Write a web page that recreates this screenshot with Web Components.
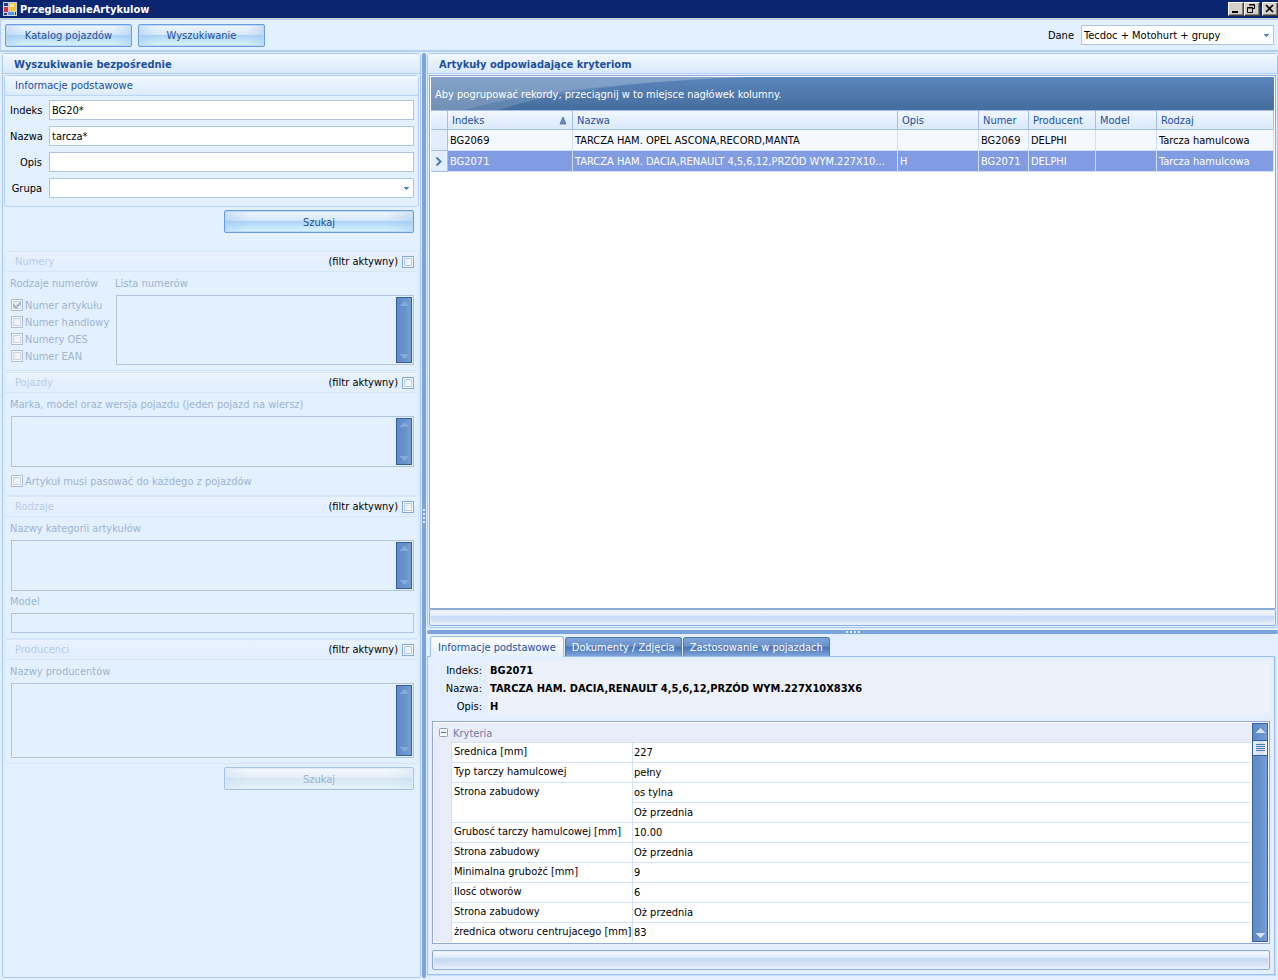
<!DOCTYPE html>
<html lang="pl">
<head>
<meta charset="utf-8">
<title>PrzegladanieArtykulow</title>
<style>
  html, body { height: 100%; }
  body {
    margin: 0;
    font: 11px/14px "DejaVu Sans Condensed", "Noto Sans", sans-serif;
    color: #000;
    background: #e3efff;
    --frame: #a9c8f0;
    --line: #b0c4e2;
    --ink: #1e4f9c;
    --muted: #9db4d2;
    --face: #e3f0ff;
  }
</style>
</head>
<body>
<app-window></app-window>
<script>
const BASE = `
  *, *::before, *::after { box-sizing: border-box; }
  input, select, textarea, button { font: inherit; color: inherit; margin: 0; border-radius: 0; outline: none; }
  :host([hidden]) { display: none; }
`;
function define(name, html, setup) {
  const template = document.createElement('template');
  template.innerHTML = html.replace('<style>', '<style>' + BASE);
  customElements.define(name, class extends HTMLElement {
    constructor() {
      super();
      this.attachShadow({ mode: 'open' }).append(template.content.cloneNode(true));
    }
    connectedCallback() {
      if (setup && !this.ready) { this.ready = true; setup.call(this, this.shadowRoot); }
    }
  });
}

/* Glossy push button */
define('ui-button', `<style>
  :host { display: block; color: var(--ink); }
  button {
    display: block; width: 100%; height: 23px; padding: 2px 6px 0; border: 1px solid #6b9be0; border-radius: 2px;
    background:
      linear-gradient(90deg, #9cc4ee66, #ffffff00 14%, #ffffff00 86%, #9cc4ee66),
      linear-gradient(#f1f7fd, #d3e7fa 48%, #aed3f6 50%, #c9e9fc 80%, #daf6ff);
    box-shadow: inset 0 0 0 1px #b9d8f7;
  }
  button:disabled {
    color: var(--muted); border-color: #a3c3ea;
    background:
      linear-gradient(90deg, #c5dcf366, #ffffff00 14%, #ffffff00 86%, #c5dcf366),
      linear-gradient(#f6fafd, #e5eef6 48%, #d5e5f2 50%, #e0eff8 80%, #ebf8fd);
    box-shadow: inset 0 0 0 1px #e0edf9;
  }
</style><button type="button"><slot></slot></button>`, function (root) {
  root.querySelector('button').disabled = this.hasAttribute('disabled');
});

/* Label with a one-line text box */
define('text-field', `<style>
  :host { display: grid; grid-template-columns: 32px 1fr; column-gap: 7px; align-items: center; }
  :host([stacked]) { grid-template-columns: 1fr; color: var(--muted); row-gap: 4px; }
  :host([stacked]) label { text-align: left; margin-left: -1px; padding-top: 1px; }
  label { padding-top: 2px; text-align: right; white-space: nowrap; }
  input { width: 100%; height: 20px; padding: 0 2px; border: 1px solid var(--line); background: #fff; }
  input:disabled { background: var(--face); }
</style><label for="box"></label><input id="box" type="text">`, function (root) {
  root.querySelector('label').textContent = this.getAttribute('label');
  const input = root.querySelector('input');
  input.value = this.getAttribute('value') || '';
  input.disabled = this.hasAttribute('disabled');
});

/* Label with a drop-down */
define('select-field', `<style>
  :host { display: grid; grid-template-columns: 32px 1fr; column-gap: 7px; align-items: center; }
  label { padding-top: 2px; text-align: right; white-space: nowrap; }
  div { position: relative; }
  select { display: block; width: 100%; height: 20px; padding: 2px 16px 0 2px; appearance: none; border: 1px solid var(--line); background: #fff; }
  svg { position: absolute; right: 5px; top: 9px; pointer-events: none; }
</style><label for="box"></label>
<div><select id="box"><option></option></select>
<svg width="5" height="3"><path d="M0 0h5v1h-1v1h-1v1h-1v-1h-1v-1h-1z" fill="#4b86c8"/></svg></div>`, function (root) {
  root.querySelector('label').textContent = this.getAttribute('label');
  root.querySelector('option').textContent = this.getAttribute('value') || '';
});

/* Tick box with caption on either side */
define('tick-box', `<style>
  :host { display: block; }
  label { display: flex; align-items: center; gap: 2px; height: 14px; white-space: nowrap; }
  span { padding-top: 1px; }
  :host([disabled]) { color: var(--muted); }
  :host([trailing]) label { flex-direction: row-reverse; gap: 4px; }
  input {
    appearance: none; flex: none; width: 12px; height: 12px; border: 1px solid #84a9dd;
    background: linear-gradient(135deg, #dfe8f4, #fff);
    box-shadow: inset 0 0 0 1px #f4f9ff, inset 0 0 0 2px #b5cdec;
    display: grid; place-items: center;
  }
  input:disabled { border-color: #a8c0dd; background: linear-gradient(135deg, #e5e8ec, #fcfcfc); box-shadow: inset 0 0 0 1px #f4f9ff, inset 0 0 0 2px #ccd6e2; }
  input:checked::before {
    content: ""; width: 8px; height: 8px; background: #a2b1c4;
    clip-path: polygon(0 30%, 38% 62%, 100% 0, 100% 35%, 38% 100%, 0 65%);
  }
</style><label><input type="checkbox"><span><slot></slot></span></label>`, function (root) {
  const input = root.querySelector('input');
  input.checked = this.hasAttribute('checked');
  input.disabled = this.hasAttribute('disabled');
});

/* Vertical scroll bar drawing */
define('scroll-track', `<style>
  :host {
    display: flex; flex-direction: column; align-items: center; width: 16px; padding: 3px 0;
    border: 1px solid #30609f; background: linear-gradient(90deg, #5f8bc6, #6993cd 60%, #79a0d6);
    --arrow: #87a9da;
  }
  :host([active]) { --arrow: #d5e3f4; padding: 4px 0 3px; }
  i { flex: 1; width: 14px; }
  b { display: none; }
  :host([active]) b {
    display: grid; place-items: center; width: 14px; height: 16px; margin-top: 7px;
    border: solid #30609f; border-width: 1px 0; background: linear-gradient(90deg, #e9eef5, #d6e0ec 60%, #f3f5f8);
    box-sizing: border-box;
  }
  svg { display: block; flex: none; }
</style>
<svg width="9" height="5"><path d="M4 0h1v1h1v1h1v1h1v1h1v1h-9v-1h1v-1h1v-1h1v-1h1z" fill="var(--arrow)"/></svg>
<b><svg width="9" height="8"><path d="M0 .5h9M0 2.5h9M0 4.5h9M0 6.5h9" stroke="#4a7cba"/></svg></b>
<i></i>
<svg width="9" height="5"><path d="M0 0h9v1h-1v1h-1v1h-1v1h-1v1h-1v-1h-1v-1h-1v-1h-1v-1h-1z" fill="var(--arrow)"/></svg>`);

/* Labelled multi-line list */
define('text-list', `<style>
  :host { display: block; color: var(--muted); }
  label { display: block; margin: 0 0 4px -1px; padding-top: 1px; white-space: nowrap; }
  .box { display: flex; border: 1px solid var(--line); padding: 1px; background: var(--face); }
  textarea { flex: 1; min-width: 0; border: 0; padding: 2px; resize: none; overflow: hidden; background: transparent; height: var(--rows, 47px); }
</style><label for="box"></label>
<div class="box"><textarea id="box" disabled></textarea><scroll-track></scroll-track></div>`, function (root) {
  root.querySelector('label').textContent = this.getAttribute('label');
});

/* Group frame with a caption band; optional filter switch */
define('group-frame', `<style>
  :host { display: block; border: 1px solid #b3d0f7; border-radius: 3px; }
  header {
    display: flex; align-items: center; justify-content: space-between; height: 20px; padding: 0 4px 0 10px;
    border-bottom: 1px solid #b9d5f8; color: var(--ink); background: linear-gradient(#f1f8ff, #dcebfd);
  }
  header span { padding-top: 1px; }
  .body { padding: 4px 4px 8px 5px; }
  :host([filter]) { border-color: #d6e6fa; }
  :host([filter]) header { color: #b6cceb; border-color: #d6e6fa; background: linear-gradient(#e9f2ff, #e1eefe); }
  :host([filter]) .body { padding: 4px 4px 5px 6px; }
  tick-box { color: #000; }
</style><header><span></span></header><div class="body"><slot></slot></div>`, function (root) {
  root.querySelector('span').textContent = this.getAttribute('caption');
  if (this.hasAttribute('filter')) {
    const tick = document.createElement('tick-box');
    tick.setAttribute('trailing', '');
    tick.textContent = '(filtr aktywny)';
    root.querySelector('header').append(tick);
  }
});

/* Docked panel with bold caption */
define('dock-panel', `<style>
  :host { display: flex; flex-direction: column; min-width: 0; min-height: 0; border: 1px solid var(--frame); border-radius: 3px; background: var(--face); }
  h2 { flex: none; height: 20px; margin: 0; padding: 4px 11px 0; font-size: 11px; line-height: 14px; color: var(--ink);
    border-bottom: 1px solid #b3d0f4; background: linear-gradient(#f1f8ff, #d9e9fc); white-space: nowrap; }
  .body { flex: 1; min-height: 0; padding: 1px; display: flex; flex-direction: column; }
</style><h2></h2><div class="body"><slot></slot></div>`, function (root) {
  root.querySelector('h2').textContent = this.getAttribute('caption');
});

/* Empty record navigator strip */
define('nav-strip', `<style>
  :host { display: block; height: 17px; border: 1px solid #8cabd9; border-radius: 2px;
    background: linear-gradient(#f6faff, #dfeafa 38%, #c3d8f2 42%, #d7e4f6 75%, #edf3fb); box-shadow: inset 0 0 0 1px #e6effa; }
</style>`);

/* Search side bar */
define('search-panel', `<style>
  :host { display: block; }
  .fields { display: grid; gap: 6px; }
  ui-button { width: 190px; margin: 3px 5px 0 auto; }
  .numbers { margin: 18px 0 1px; }
  .split { display: flex; }
  .kinds { flex: 0 0 105px; color: var(--muted); }
  .kinds span { display: block; margin: 0 0 7px -1px; padding-top: 1px; }
  .kinds tick-box + tick-box { margin-top: 3px; }
  .split text-list { flex: 1; min-width: 0; --rows: 66px; }
  .vehicles tick-box { margin: 7px 0 2px; }
  .types text-field { margin-top: 3px; }
  .makers { --rows: 71px; }
</style>
<group-frame caption="Informacje podstawowe"><div class="fields">
  <text-field label="Indeks" value="BG20*"></text-field>
  <text-field label="Nazwa" value="tarcza*"></text-field>
  <text-field label="Opis"></text-field>
  <select-field label="Grupa"></select-field>
</div></group-frame>
<ui-button>Szukaj</ui-button>
<group-frame class="numbers" filter caption="Numery"><div class="split">
  <div class="kinds"><span>Rodzaje numerów</span>
    <tick-box disabled checked>Numer artykułu</tick-box>
    <tick-box disabled>Numer handlowy</tick-box>
    <tick-box disabled>Numery OES</tick-box>
    <tick-box disabled>Numer EAN</tick-box>
  </div>
  <text-list label="Lista numerów"></text-list>
</div></group-frame>
<group-frame class="vehicles" filter caption="Pojazdy">
  <text-list label="Marka, model oraz wersja pojazdu (jeden pojazd na wiersz)"></text-list>
  <tick-box disabled>Artykuł musi pasować do każdego z pojazdów</tick-box>
</group-frame>
<group-frame class="types" filter caption="Rodzaje">
  <text-list label="Nazwy kategorii artykułów"></text-list>
  <text-field stacked disabled label="Model"></text-field>
</group-frame>
<group-frame class="makers" filter caption="Producenci">
  <text-list label="Nazwy producentów"></text-list>
</group-frame>
<ui-button disabled>Szukaj</ui-button>`);

/* Results grid */
define('article-grid', `<style>
  :host { display: flex; flex-direction: column; flex: 1; min-height: 0; }
  .frame { flex: 1; min-height: 0; border: 1px solid #8faad8; padding: 1px; background: #fff; }
  .grouping { position: relative; height: 33px; padding: 11px 4px 0; color: #fff; background: linear-gradient(#5b86bb, #466d9f); overflow: hidden; white-space: nowrap; }
  .grouping svg { position: absolute; left: 0; top: 0; }
  .grouping span { position: relative; }
  table { width: 100%; table-layout: fixed; border-collapse: separate; border-spacing: 0; }
  th, td { height: 21px; padding: 2px 2px 0; text-align: left; font-weight: normal; white-space: nowrap; overflow: hidden; text-overflow: ellipsis; border-right: 1px solid #cfdff5; border-bottom: 1px solid #cfdff5; }
  thead th { height: 20px; padding: 1px 4px 0; color: var(--ink); background: linear-gradient(#f0f7ff, #dbe9fb); border-color: #a5c0e4; border-top: 1px solid #a5c0e4; }
  thead div { display: flex; align-items: center; justify-content: space-between; }
  thead svg { margin-right: 1px; }
  tbody td { background: #f5f9ff; }
  tbody th { padding: 0; background: #e2eefd; border-color: #a5c0e4; }
  tbody svg { display: block; margin: 0 auto; }
  tr.selected td { color: #fff; background: #829ce3; }
  nav-strip { flex: none; }
</style>
<div class="frame">
  <div class="grouping">
    <svg width="320" height="33"><path d="M0 0h320Q150 5 68 33H0z" fill="#fff" opacity=".14"/><path d="M0 0h320Q120 8 33 33H0z" fill="#fff" opacity=".12"/></svg>
    <span>Aby pogrupować rekordy, przeciągnij w to miejsce nagłówek kolumny.</span>
  </div>
  <table>
    <colgroup><col style="width:17px"><col style="width:125px"><col><col style="width:81px"><col style="width:50px"><col style="width:67px"><col style="width:61px"><col style="width:117px"></colgroup>
    <thead><tr><th></th>
      <th scope="col"><div>Indeks<svg width="8" height="8"><path d="M4 0L7 7H1z" fill="#5f8fc9" stroke="#47709f" stroke-width=".8"/></svg></div></th>
      <th scope="col">Nazwa</th><th scope="col">Opis</th><th scope="col">Numer</th><th scope="col">Producent</th><th scope="col">Model</th><th scope="col">Rodzaj</th></tr></thead>
    <tbody>
      <tr><th></th><td>BG2069</td><td>TARCZA HAM. OPEL ASCONA,RECORD,MANTA</td><td></td><td>BG2069</td><td>DELPHI</td><td></td><td>Tarcza hamulcowa</td></tr>
      <tr class="selected"><th><svg width="6" height="9"><path d="M.5 .5L4.5 4.5L.5 8.5" fill="none" stroke="#4f7db8" stroke-width="2"/></svg></th><td>BG2071</td><td>TARCZA HAM. DACIA,RENAULT 4,5,6,12,PRZÓD WYM.227X10...</td><td>H</td><td>BG2071</td><td>DELPHI</td><td></td><td>Tarcza hamulcowa</td></tr>
    </tbody>
  </table>
</div>
<nav-strip></nav-strip>`);

/* Criteria property grid */
define('criteria-grid', `<style>
  :host { display: flex; border: 1px solid #8faad8; padding: 1px; background: #fff; }
  .main { flex: 1; min-width: 0; display: grid; grid-template-columns: 17px minmax(0, 1fr); background: #e9edfa; border-right: 1px solid #fff; }
  .cat { grid-column: 1 / -1; display: flex; align-items: center; gap: 5px; height: 19px; padding: 2px 0 0 5px; color: #7179a8; }
  .cat svg { margin-top: -3px; }
  table { grid-column: 2; width: 100%; table-layout: fixed; border-collapse: separate; border-spacing: 0; background: #fff; }
  th, td { height: 20px; padding: 3px 1px 0; vertical-align: top; text-align: left; font-weight: normal; line-height: 14px; border: solid #d3e2f5; border-width: 1px 0 0 1px; white-space: nowrap; overflow: hidden; }
  th { padding: 2px 0 0 2px; }
</style>
<div class="main">
  <div class="cat"><svg width="9" height="9"><rect x=".5" y=".5" width="8" height="8" rx="1" fill="#f3f6fb" stroke="#8aa0bd"/><path d="M2 4.5h5" stroke="#4b6d9c"/></svg>Kryteria</div>
  <table><colgroup><col style="width:181px"><col></colgroup><tbody></tbody></table>
</div>
<scroll-track active></scroll-track>`, function (root) {
  const rows = [
    ['Srednica [mm]', '227'], ['Typ tarczy hamulcowej', 'pełny'],
    ['Strona zabudowy', 'os tylna', 'Oż przednia'], ['Grubosć tarczy hamulcowej [mm]', '10.00'],
    ['Strona zabudowy', 'Oż przednia'], ['Minimalna grubożć [mm]', '9'], ['Ilosć otworów', '6'],
    ['Strona zabudowy', 'Oż przednia'], ['żrednica otworu centrujacego [mm]', '83']
  ];
  root.querySelector('tbody').innerHTML = rows.map(([name, ...values]) => values.map((value, i) =>
    `<tr>${i ? '' : `<th scope="row" rowspan="${values.length}">${name}</th>`}<td>${value}</td></tr>`).join('')).join('');
});

/* Tabbed details */
define('detail-tabs', `<style>
  :host { display: block; min-width: 0; }
  nav { display: flex; align-items: flex-end; gap: 1px; padding-left: 3px; height: 20px; }
  button { height: 19px; padding: 1px 6px 0; border: 1px solid #4a78ba; border-bottom: 0; border-radius: 3px 3px 0 0; color: #fff; white-space: nowrap;
    background: linear-gradient(#7fa4d9, #6a92cc 45%, #4573b8 50%, #7fa4da); }
  button.on { position: relative; height: 21px; padding: 1px 7px 0; margin-bottom: -1px; color: var(--ink); border-color: #9cc0ee; background: linear-gradient(#fff, #e3f0ff); }
  .page { border: 1px solid #9cc0ee; padding: 4px; box-shadow: 1px 1px 0 #c6dbf5; }
  dl { display: grid; grid-template-columns: 50px 1fr; column-gap: 6px; margin: 0; grid-auto-rows: 18px; line-height: 18px; }
  dt { padding-top: 1px; text-align: right; }
  dd { margin: 0; padding: 1px 0 0 2px; font-weight: bold; background: #ecf1fa; white-space: nowrap; overflow: hidden; }
  criteria-grid { margin-top: 6px; }
  nav-strip { height: 20px; margin-top: 6px; }
</style>
<nav role="tablist"><button class="on" type="button" role="tab" aria-selected="true">Informacje podstawowe</button><button type="button" role="tab">Dokumenty / Zdjęcia</button><button type="button" role="tab">Zastosowanie w pojazdach</button></nav>
<div class="page" role="tabpanel">
  <dl><dt>Indeks:</dt><dd>BG2071</dd><dt>Nazwa:</dt><dd>TARCZA HAM. DACIA,RENAULT 4,5,6,12,PRZÓD WYM.227X10X83X6</dd><dt>Opis:</dt><dd>H</dd></dl>
  <criteria-grid></criteria-grid>
  <nav-strip></nav-strip>
</div>`);

/* Splitter bar with grip dots */
define('split-bar', `<style>
  :host { display: flex; align-items: center; justify-content: center; background: #7ba3dd; border-radius: 2px; }
  i { display: block; width: 14px; height: 2px; background: repeating-linear-gradient(90deg, #e8f1fd 0 2px, transparent 2px 4px); }
  :host([vertical]) i { width: 2px; height: 14px; background: repeating-linear-gradient(#e8f1fd 0 2px, transparent 2px 4px); }
</style><i></i>`);

/* Window caption */
define('title-bar', `<style>
  :host { display: flex; align-items: center; gap: 3px; height: 19px; padding: 0 0 0 3px; color: #fff; background: #0b2670; border-bottom: 1px solid #cfd0d3; }
  h1 { flex: 1; margin: 0; padding-top: 1px; font-size: 11px; line-height: 14px; }
  .buttons { display: flex; }
  button { width: 16px; height: 14px; padding: 0; border: 1px solid; border-color: #fff #404040 #404040 #fff; background: #d6d2ca; box-shadow: inset -1px -1px #808080; }
  button:last-child { margin-left: 2px; }
  button svg, .icon { display: block; }
</style>
<svg class="icon" width="14" height="14"><rect width="14" height="14" fill="#c9d3e6"/><rect x="1" y="1" width="4" height="3" fill="#24407c"/><rect x="1" y="5" width="4" height="5" fill="#d8332a"/><rect x="6" y="1" width="7" height="8" fill="#f6c535"/><rect x="7" y="2" width="4" height="3" fill="#fbe38d"/><rect x="1" y="11" width="3" height="2" fill="#24407c"/><rect x="5" y="10" width="6" height="3" fill="#5f95e8"/><rect x="12" y="10" width="1" height="3" fill="#24407c"/></svg>
<h1>PrzegladanieArtykulow</h1>
<div class="buttons">
  <button type="button" aria-label="Minimalizuj"><svg width="14" height="12"><path d="M3 8h6v2H3z"/></svg></button>
  <button type="button" aria-label="Przywróć"><svg width="14" height="12"><path d="M4.500 1.500h5v4h-2M4 2h6M2.500 4.500h5v5h-5zM2 5h6" fill="none" stroke="#000"/></svg></button>
  <button type="button" aria-label="Zamknij"><svg width="14" height="12"><path d="M3 2L10 9M10 2L3 9" fill="none" stroke="#000" stroke-width="1.600"/></svg></button>
</div>`);

/* Command row */
define('tool-bar', `<style>
  :host { display: flex; align-items: center; gap: 6px; height: 33px; padding: 0 4px; border: solid #b3cff3; border-width: 1px 0 2px 1px; border-radius: 3px 0 0 0; background: #e3f0ff; }
  ui-button { width: 127px; }
  select-field { width: 232px; margin-left: auto; }
</style>
<ui-button>Katalog pojazdów</ui-button><ui-button>Wyszukiwanie</ui-button>
<select-field label="Dane" value="Tecdoc + Motohurt + grupy"></select-field>`);

define('app-window', `<style>
  :host { display: flex; flex-direction: column; min-height: 100vh; }
  main { flex: 1; display: grid; grid-template-columns: 419px 4px minmax(0, 1fr); column-gap: 1px; padding: 1px 0 2px 2px; }
  .right { display: grid; grid-template-rows: minmax(0, 1fr) 4px auto; row-gap: 2px; min-width: 0; }
  detail-tabs { margin: 0 3px 3px 0; }
</style>
<title-bar></title-bar>
<tool-bar></tool-bar>
<main>
  <dock-panel caption="Wyszukiwanie bezpośrednie"><search-panel></search-panel></dock-panel>
  <split-bar vertical></split-bar>
  <div class="right">
    <dock-panel caption="Artykuły odpowiadające kryteriom"><article-grid></article-grid></dock-panel>
    <split-bar></split-bar>
    <detail-tabs></detail-tabs>
  </div>
</main>`);
</script>
</body>
</html>
